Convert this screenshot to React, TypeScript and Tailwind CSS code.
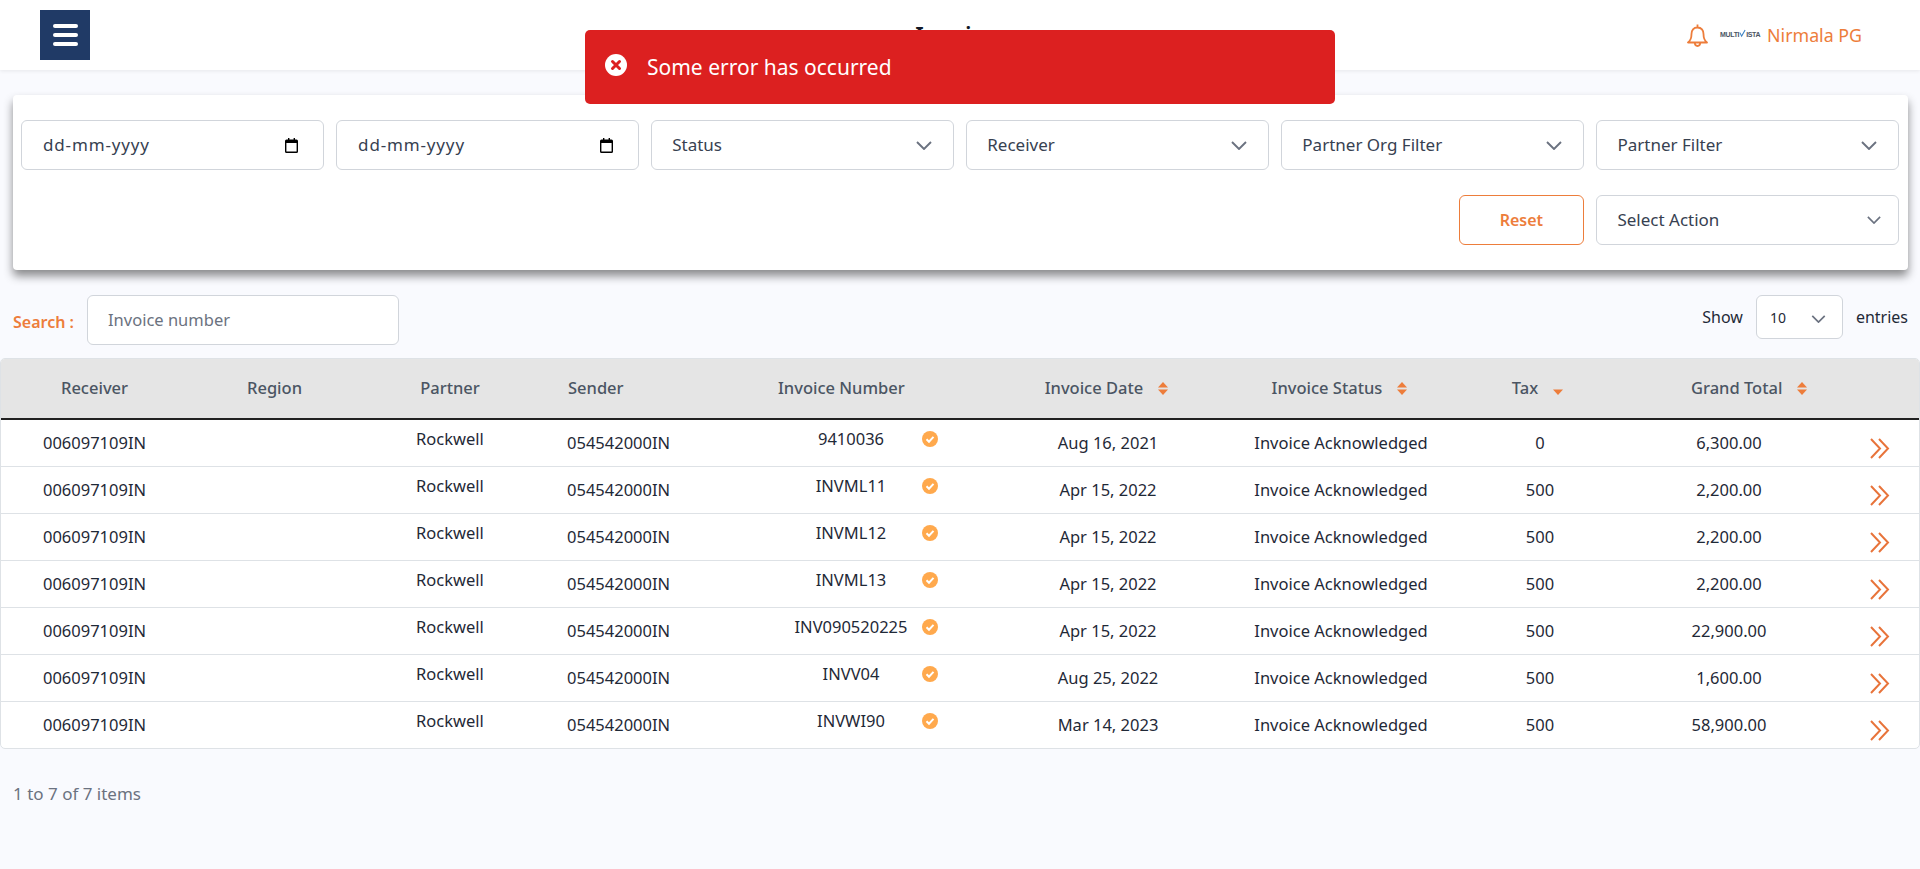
const rows = [
  { invoice: '9410036', date: 'Aug 16, 2021', tax: '0', total: '6,300.00' },
  { invoice: 'INVML11', date: 'Apr 15, 2022', tax: '500', total: '2,200.00' },
  { invoice: 'INVML12', date: 'Apr 15, 2022', tax: '500', total: '2,200.00' },
  { invoice: 'INVML13', date: 'Apr 15, 2022', tax: '500', total: '2,200.00' },
  { invoice: 'INV090520225', date: 'Apr 15, 2022', tax: '500', total: '22,900.00' },
  { invoice: 'INVV04', date: 'Aug 25, 2022', tax: '500', total: '1,600.00' },
  { invoice: 'INVWI90', date: 'Mar 14, 2023', tax: '500', total: '58,900.00' },
];

const Chevron = ({ className = 'w-4 h-[9px]' }: { className?: string }) => (
  <svg viewBox="0 0 16 9" className={className} fill="none" stroke="#6b7280" strokeWidth="1.9">
    <path d="M1 1l7 7 7-7" />
  </svg>
);

const CalendarIcon = () => (
  <svg viewBox="0 0 13 15" className="w-[13px] h-[15px]">
    <path
      fillRule="evenodd"
      d="M3 0h1.4v1.5h4.2V0H10v1.5h1.5A1.5 1.5 0 0 1 13 3v10.5a1.5 1.5 0 0 1-1.5 1.5h-10A1.5 1.5 0 0 1 0 13.5V3a1.5 1.5 0 0 1 1.5-1.5H3zM1.4 5v8.6h10.2V5z"
      fill="#000"
    />
  </svg>
);

const BellIcon = () => (
  <svg viewBox="0 0 21 23" className="w-[21px] h-[23px]" fill="none" stroke="#ed7d3b" strokeWidth="1.8" strokeLinejoin="round">
    <path d="M10.5 0.5v3M10.5 3.5C6.5 3.5 4.5 6.5 4.5 10c0 5-1.5 7-3.5 8.5h19c-2-1.5-3.5-3.5-3.5-8.5 0-3.5-2-6.5-6-6.5z" />
    <path d="M7.8 18.5c0 2.5 1.2 3.5 2.7 3.5s2.7-1 2.7-3.5" />
  </svg>
);

const SortIcon = ({ onlyDown = false }: { onlyDown?: boolean }) => (
  <svg viewBox="0 0 12 13" className="w-3 h-[13px] shrink-0">
    {!onlyDown && <path d="M6 0l5 5.5H1z" fill="#ed7d3b" />}
    <path d="M1 7.5h10L6 13z" fill="#ed7d3b" />
  </svg>
);

const DateField = () => (
  <div className="h-[50px] flex items-center justify-between pl-[21px] pr-[25px] bg-white border border-[#d1d5db] rounded-md text-[17px] text-[#374151]">
    <span className="tracking-[0.85px]">dd-mm-yyyy</span>
    <CalendarIcon />
  </div>
);

const SelectField = ({ label }: { label: string }) => (
  <div className="h-[50px] flex items-center justify-between pl-[20px] pr-[21px] bg-white border border-[#d1d5db] rounded-md text-[17px] text-[#374151]">
    <span>{label}</span>
    <Chevron />
  </div>
);

const HeaderCell = ({ label, className = '' }: { label: string; className?: string }) => (
  <th className={`p-0 font-medium text-[#4b5563] ${className}`}>{label}</th>
);

const SortHeader = ({ label, gap, onlyDown }: { label: string; gap: string; onlyDown?: boolean }) => (
  <span className={`inline-flex items-center justify-center ${gap}`}>
    {label}
    <SortIcon onlyDown={onlyDown} />
  </span>
);

export default function App() {
  return (
    <div className="relative min-h-screen bg-[#f9fafe] font-['Noto_Sans',sans-serif] text-[16.5px] text-[#1f2937]">
      <header className="h-[70px] bg-white shadow-[0_1px_4px_rgba(0,0,0,0.08)] flex items-center justify-between pl-[40px] pr-[58px]">
        <button className="w-[50px] h-[50px] bg-[#203a66] flex flex-col items-center justify-center gap-[5px]">
          <span className="w-[25px] h-[4px] rounded-full bg-white" />
          <span className="w-[25px] h-[4px] rounded-full bg-white" />
          <span className="w-[25px] h-[4px] rounded-full bg-white" />
        </button>
        <h1 className="text-[23px] font-semibold text-[#111827] ml-[146px]">Invoices</h1>
        <div className="flex items-center text-[#ed7d3b]">
          <BellIcon />
          <span className="ml-[12px] w-[39px] flex items-center justify-between text-[7px] font-bold text-[#4b5563] font-['Liberation_Sans',sans-serif]">
            <span className="tracking-tighter">MULTI</span>
            <svg viewBox="0 0 8 8" className="w-[7px] h-[9px] -mt-[3px] shrink-0" fill="none" stroke="#3b82c4" strokeWidth="1.2">
              <path d="M1 3l2 4 4-7" />
            </svg>
            <span className="tracking-tighter">ISTA</span>
          </span>
          <span className="ml-[8px] text-[17.8px]">Nirmala PG</span>
        </div>
      </header>

      <div className="absolute left-[585px] top-[30px] w-[750px] h-[74px] bg-[#dc2020] rounded-[5px] flex items-center pl-[20px] text-white text-[21px]">
        <svg viewBox="0 0 22 22" className="w-[22px] h-[22px] shrink-0 -mt-[4px]">
          <circle cx="11" cy="11" r="11" fill="#fff" />
          <path d="M7.5 7.5l7 7m0-7l-7 7" stroke="#dc2020" strokeWidth="3" strokeLinecap="round" />
        </svg>
        <span className="ml-[20px] mt-[2px]">Some error has occurred</span>
      </div>

      <section className="mt-[25px] ml-[13px] mr-[12px] bg-white rounded-[4px] shadow-[0_6px_10px_rgba(0,0,0,0.45)] pt-[25px] pb-[25px] pl-[8px] pr-[9px]">
        <div className="grid grid-cols-6 gap-x-[12.5px]">
          <DateField />
          <DateField />
          <SelectField label="Status" />
          <SelectField label="Receiver" />
          <SelectField label="Partner Org Filter" />
          <SelectField label="Partner Filter" />
        </div>
        <div className="mt-[25px] grid grid-cols-6 gap-x-[12.5px]">
          <div className="col-start-5 flex justify-end">
            <button className="w-[125px] h-[50px] border border-[#ed7d3b] rounded-md text-[16px] text-[#ed7d3b] font-semibold bg-white">
              Reset
            </button>
          </div>
          <div className="h-[50px] flex items-center justify-between pl-[20px] pr-[17px] bg-white border border-[#d1d5db] rounded-md text-[17px] text-[#374151]">
            <span>Select Action</span>
            <Chevron className="w-[14px] h-[8px]" />
          </div>
        </div>
      </section>

      <div className="mt-[25px] pl-[13px] pr-[12px] flex items-start justify-between">
        <div className="flex items-center">
          <span className="w-[61px] text-[16px] font-semibold text-[#ed7d3b] mt-[4px] whitespace-nowrap">Search :</span>
          <div className="ml-[13px] w-[312px] h-[50px] flex items-center pl-[20px] bg-white border border-[#d1d5db] rounded-md text-[#6b7280]">
            Invoice number
          </div>
        </div>
        <div className="flex items-center text-[16px]">
          <span>Show</span>
          <div className="ml-[13px] w-[87px] h-[44px] flex items-center justify-between pl-[13px] pr-[16px] bg-white border border-[#d1d5db] rounded-md text-[14px]">
            10
            <Chevron className="w-[15px] h-[8px] mt-[4px]" />
          </div>
          <span className="ml-[13px]">entries</span>
        </div>
      </div>

      <div className="mt-[13px] border border-[#dee2e6] rounded-[5px] bg-white overflow-hidden">
        <table className="w-full table-fixed border-collapse">
          <colgroup>
            <col className="w-[187px]" />
            <col className="w-[173px]" />
            <col className="w-[178px]" />
            <col className="w-[239px]" />
            <col className="w-[223px]" />
            <col className="w-[214px]" />
            <col className="w-[252px]" />
            <col className="w-[146px]" />
            <col className="w-[232px]" />
            <col />
          </colgroup>
          <thead>
            <tr className="h-[60px] bg-[#e5e5e5] border-b-2 border-[#212121]">
              <HeaderCell label="Receiver" className="text-center" />
              <HeaderCell label="Region" className="text-center" />
              <HeaderCell label="Partner" className="text-center" />
              <HeaderCell label="Sender" className="text-left pl-[29px]" />
              <HeaderCell label="Invoice Number" className="text-left" />
              <th className="p-0 pr-[2px] font-medium text-[#4b5563] text-center">
                <SortHeader label="Invoice Date" gap="gap-[14px]" />
              </th>
              <th className="p-0 pr-[2px] font-medium text-[#4b5563] text-center">
                <SortHeader label="Invoice Status" gap="gap-[14px]" />
              </th>
              <th className="p-0 pr-[4px] font-medium text-[#4b5563] text-center">
                <SortHeader label="Tax" gap="gap-[14px]" onlyDown />
              </th>
              <th className="p-0 font-medium text-[#4b5563] text-left pl-[78px]">
                <SortHeader label="Grand Total" gap="gap-[14px]" />
              </th>
              <th className="p-0" />
            </tr>
          </thead>
          <tbody>
            {rows.map((row) => (
              <tr key={row.invoice} className="h-[47px] border-b border-[#dee2e6] last:border-b-0">
                <td className="p-0 pt-[1px] text-center">006097109IN</td>
                <td className="p-0" />
                <td className="p-0 pb-[7px] text-center">Rockwell</td>
                <td className="p-0 pt-[1px] pl-[28px]">054542000IN</td>
                <td className="p-0 pb-[7px]">
                  <div className="flex items-center">
                    <span className="ml-[2px] w-[142px] text-center">{row.invoice}</span>
                    <svg viewBox="0 0 16 16" className="w-4 h-4 shrink-0">
                      <circle cx="8" cy="8" r="8" fill="#ffa94d" />
                      <path d="M4.5 8.2l2.5 2.5 4.5-4.8" fill="none" stroke="#fff" strokeWidth="2" />
                    </svg>
                  </div>
                </td>
                <td className="p-0 pt-[1px] text-center">{row.date}</td>
                <td className="p-0 pt-[1px] text-center">Invoice Acknowledged</td>
                <td className="p-0 pt-[1px] text-center">{row.tax}</td>
                <td className="p-0 pt-[1px] text-center">{row.total}</td>
                <td className="p-0 pt-[12px] pl-[25px]">
                  <svg viewBox="0 0 20 21" className="w-5 h-[21px]" fill="none" stroke="#e8743b" strokeWidth="2">
                    <path d="M1 1l9 9.5L1 20M9 1l9 9.5L9 20" />
                  </svg>
                </td>
              </tr>
            ))}
          </tbody>
        </table>
      </div>

      <p className="mt-[32px] pl-[13px] text-[17px] text-[#6b7280]">1 to 7 of 7 items</p>
    </div>
  );
}
